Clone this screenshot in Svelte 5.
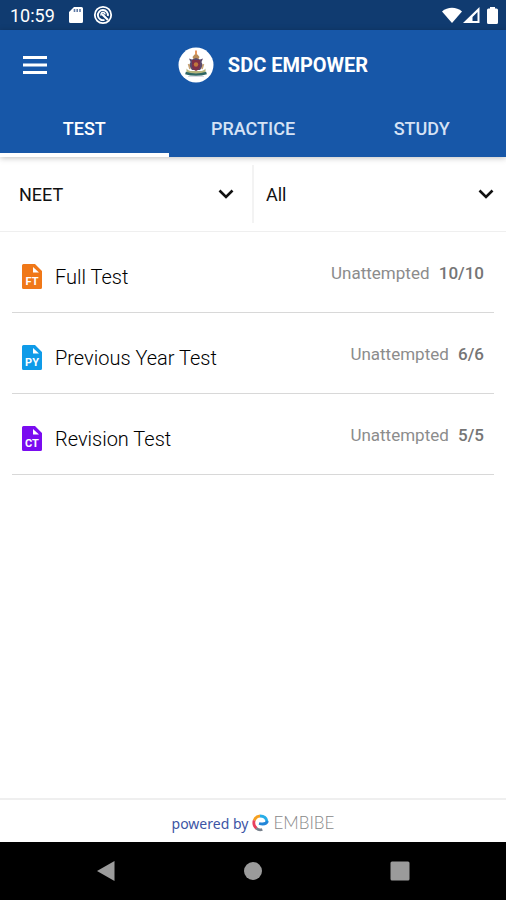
<script lang="ts">
	interface TestType {
		name: string;
		code: string;
		color: string;
		unattempted: number;
		total: number;
	}

	const tabs = ['TEST', 'PRACTICE', 'STUDY'];

	const tests: TestType[] = [
		{ name: 'Full Test', code: 'FT', color: '#f07818', unattempted: 10, total: 10 },
		{ name: 'Previous Year Test', code: 'PY', color: '#0f9be8', unattempted: 6, total: 6 },
		{ name: 'Revision Test', code: 'CT', color: '#7a0cf0', unattempted: 5, total: 5 }
	];

	let activeTab = $state('TEST');
	let exam = $state('NEET');
	let subject = $state('All');
</script>

{#snippet chevron()}
	<svg class="chevron" width="16" height="10" viewBox="0 0 16 10" fill="none" aria-hidden="true">
		<path d="M1.500 1.500L8 8l6.500-6.500" stroke="#111" stroke-width="2.600" />
	</svg>
{/snippet}

<div class="screen">
	<div class="status-bar">
		<span class="time">10:59</span>
		<svg width="14" height="16" viewBox="0 0 14 16" aria-hidden="true">
			<path d="M5 0h7.500A1.500 1.500 0 0 1 14 1.500v13a1.500 1.500 0 0 1-1.500 1.500h-11A1.500 1.500 0 0 1 0 14.500V5z" fill="#fff" />
			<path d="M5.500 2v3M8.200 2v3M11 2v3" stroke="#5f7aa5" stroke-width="1.600" />
		</svg>
		<svg class="sync" width="20" height="20" viewBox="0 0 20 20" fill="none" stroke="#fff" aria-hidden="true">
			<circle cx="10" cy="10" r="8.200" stroke-width="1.800" />
			<path d="M11.500 14.800A5 5 0 1 1 14.800 11" stroke-width="1.900" />
			<path d="M9 9l6 6" stroke-width="2.200" />
			<path d="M8.300 10.500A2 2 0 1 1 12 9.500" stroke-width="1.500" />
		</svg>
		<div class="system-icons">
			<svg width="20" height="16" viewBox="0 0 20 16" aria-hidden="true">
				<path d="M10 16L0 4.500C5.500-.5 14.500-.5 20 4.500z" fill="#fff" />
			</svg>
			<svg width="17" height="16" viewBox="0 0 17 16" aria-hidden="true">
				<path d="M16.500 0v16H0zM14.500 5l-5 5v4h5z" fill="#fff" fill-rule="evenodd" />
			</svg>
			<svg class="battery" width="11" height="17" viewBox="0 0 11 17" aria-hidden="true">
				<path d="M3 0h5v1.500h1.500A1.500 1.500 0 0 1 11 3v12.500A1.500 1.500 0 0 1 9.500 17h-8A1.500 1.500 0 0 1 0 15.500V3A1.500 1.500 0 0 1 1.500 1.500H3z" fill="#fff" />
			</svg>
		</div>
	</div>

	<header>
		<div class="app-bar">
			<button class="menu" aria-label="Open menu">
				<svg width="24" height="18" viewBox="0 0 24 18" aria-hidden="true">
					<path d="M0 1.500h24M0 9h24M0 16.500h24" stroke="#fff" stroke-width="2.800" />
				</svg>
			</button>
			<div class="brand">
				<svg width="36" height="36" viewBox="0 0 36 36" aria-hidden="true">
					<circle cx="18" cy="18" r="17.500" fill="#fff" />
					<path d="M18 3.500v5" stroke="#e28a4d" stroke-width="1.800" />
					<path d="M14.500 10l2-2.500h3l2 2.500-1 2h-5z" fill="#b98d5a" />
					<path d="M11 11.500l3 1 4-1.500 4 1.500 3-1-1.500 3.500 1.500 4-3 4h-8l-3-4 1.500-4z" fill="#5a4a6c" />
					<path d="M14 13h8v6c0 3-2 4-4 5-2-1-4-2-4-5z" fill="#7e3048" />
					<circle cx="18" cy="17.500" r="2.200" fill="#c2783c" />
					<path d="M10.500 17l1.500 5M25.500 17L24 22" stroke="#c9a574" stroke-width="1.600" />
					<path d="M8.500 21.500c2 3 4 2.500 9.500 2.500s7.500.5 9.500-2.500v3.500c-3 2-5 2-9.500 2s-6.500 0-9.500-2z" fill="#b5b47c" />
					<path d="M7.500 26c6 2 15 2 21 0" stroke="#2f6664" stroke-width="2.400" fill="none" />
					<path d="M10 29.500h16" stroke="#d5d7e2" />
				</svg>
				<h1>SDC EMPOWER</h1>
			</div>
		</div>
		<nav class="tabs" aria-label="Sections">
			{#each tabs as tab}
				<button class="tab" class:active={activeTab === tab} onclick={() => (activeTab = tab)}>
					{tab}
				</button>
			{/each}
		</nav>
	</header>

	<div class="filters">
		<div class="filter">
			<select bind:value={exam} aria-label="Exam">
				<option>NEET</option>
			</select>
			{@render chevron()}
		</div>
		<div class="filter">
			<select bind:value={subject} aria-label="Subject">
				<option>All</option>
			</select>
			{@render chevron()}
		</div>
	</div>

	<main>
		<ul class="tests">
			{#each tests as test}
				<li class="test">
					<svg class="test-icon" width="20" height="25" viewBox="0 0 20 25" aria-hidden="true">
						<path d="M1.500 0H13l7 7v16.500a1.500 1.500 0 0 1-1.500 1.500h-17A1.500 1.500 0 0 1 0 23.500v-22A1.500 1.500 0 0 1 1.500 0z" fill={test.color} />
						<path d="M11 3v5.500h6z" fill="#fff" />
						<text x="10" y="21" text-anchor="middle">{test.code}</text>
					</svg>
					<span class="test-name">{test.name}</span>
					<span class="test-status">
						Unattempted <b>{test.unattempted}/{test.total}</b>
					</span>
				</li>
			{/each}
		</ul>
	</main>

	<footer>
		<span class="powered">powered by</span>
		<svg width="17" height="18" viewBox="0 0 17 18" fill="none" stroke-width="2.800" aria-hidden="true">
			<path d="M2.200 6.500A6.800 6.800 0 0 1 8 2" stroke="#f5a020" />
			<path d="M8 2c4 0 6.500 2.200 7 5.500" stroke="#28aee8" />
			<path d="M15.500 7c-1 3-4.500 3.500-8.500 2.500" stroke="#2285d8" />
			<path d="M2.200 6.300c-1 3.500 0 6.200 2.300 8" stroke="#e93f5d" />
			<path d="M4.300 14.200c2 1.800 4 2 6 1.300" stroke="#77808c" />
		</svg>
		<span class="embibe">EMBIBE</span>
	</footer>

	<div class="system-nav">
		<button aria-label="Back">
			<svg width="20" height="22" viewBox="0 0 20 22" aria-hidden="true">
				<path d="M18.500 1v20L1 11z" fill="#9b9b9b" />
			</svg>
		</button>
		<button aria-label="Home">
			<svg width="20" height="20" viewBox="0 0 20 20" aria-hidden="true">
				<circle cx="10" cy="10" r="9" fill="#9b9b9b" />
			</svg>
		</button>
		<button aria-label="Recent apps">
			<svg width="20" height="20" viewBox="0 0 20 20" aria-hidden="true">
				<rect x="0.500" y="0.500" width="19" height="19" rx="1.500" fill="#9b9b9b" />
			</svg>
		</button>
	</div>
</div>

<style>
	:global(body) {
		margin: 0;
	}

	.screen {
		display: flex;
		flex-direction: column;
		min-height: 100vh;
		background: #fff;
		color: #111;
		font-family: Roboto, 'Noto Sans', sans-serif;
	}

	button {
		padding: 0;
		border: 0;
		background: none;
		font-family: inherit;
		cursor: pointer;
	}

	svg {
		display: block;
		flex-shrink: 0;
	}

	.status-bar {
		display: flex;
		align-items: center;
		height: 30px;
		padding: 0 8px 0 10px;
		background: #103b70;
		color: #fff;
	}

	.time {
		margin-right: 14px;
		font-size: 18px;
	}

	.sync {
		margin-left: 10px;
	}

	.system-icons {
		display: flex;
		align-items: center;
		gap: 1px;
		margin-left: auto;
	}

	.battery {
		margin-left: 6px;
	}

	header {
		position: relative;
		background: #1757a8;
		color: #fff;
		box-shadow: 0 1px 6px rgba(0, 0, 0, 0.25);
	}

	.app-bar {
		display: grid;
		grid-template-columns: 1fr auto 1fr;
		align-items: center;
		height: 70px;
	}

	.menu {
		justify-self: start;
		padding: 12px 23px;
	}

	.brand {
		display: flex;
		align-items: center;
		gap: 14px;
		margin-left: 40px;
	}

	h1 {
		margin: 0;
		font-size: 20px;
		font-weight: 700;
		line-height: 24px;
	}

	.tabs {
		display: flex;
	}

	.tab {
		flex: 1;
		height: 57px;
		border-top: 4px solid transparent;
		border-bottom: 4px solid transparent;
		color: #d5e2f5;
		font-size: 18px;
		font-weight: 500;
	}

	.tab.active {
		border-bottom-color: #fff;
		color: #fff;
	}

	.filters {
		display: flex;
		padding: 8px 0;
		border-bottom: 1px solid #efefef;
	}

	.filter {
		position: relative;
		flex: 1;
	}

	.filter + .filter {
		border-left: 2px solid #f3f3f3;
	}

	select {
		width: 100%;
		height: 58px;
		padding: 0 40px 0 19px;
		border: 0;
		appearance: none;
		background: none;
		color: #111;
		font-family: inherit;
		font-size: 18px;
	}

	.filter + .filter select {
		padding-left: 12px;
	}

	.chevron {
		position: absolute;
		top: 24px;
		right: 18px;
		pointer-events: none;
	}

	.filter + .filter .chevron {
		right: 12px;
	}

	main {
		flex: 1;
	}

	.tests {
		margin: 0;
		padding: 0 12px;
		list-style: none;
	}

	.test {
		display: flex;
		align-items: center;
		height: 72px;
		padding: 8px 10px 0;
		border-bottom: 1px solid #d8d8d8;
	}

	.test-icon text {
		fill: #fff;
		font-size: 11px;
		font-weight: 700;
	}

	.test-name {
		margin-left: 13px;
		padding-top: 2px;
		font-size: 20px;
		font-weight: 300;
		line-height: 24px;
		color: #000;
	}

	.test-status {
		margin-left: auto;
		padding-bottom: 6px;
		color: #8c8c8c;
		font-size: 17px;
	}

	.test-status b {
		margin-left: 5px;
		color: #757575;
		font-weight: 500;
	}

	footer {
		display: flex;
		align-items: center;
		justify-content: center;
		height: 44px;
		padding-top: 4px;
		border-top: 2px solid #efefef;
		box-sizing: border-box;
	}

	.powered {
		margin-right: 4px;
		color: #3d55a5;
		font-family: 'Noto Sans', sans-serif;
		font-size: 14px;
	}

	.embibe {
		margin-left: 4px;
		color: #888;
		font-family: Lato, sans-serif;
		font-size: 17px;
		font-weight: 300;
		line-height: 20px;
	}

	.system-nav {
		display: flex;
		height: 58px;
		padding: 0 33px;
		background: #000;
	}

	.system-nav button {
		display: flex;
		flex: 1;
		align-items: center;
		justify-content: center;
	}
</style>
